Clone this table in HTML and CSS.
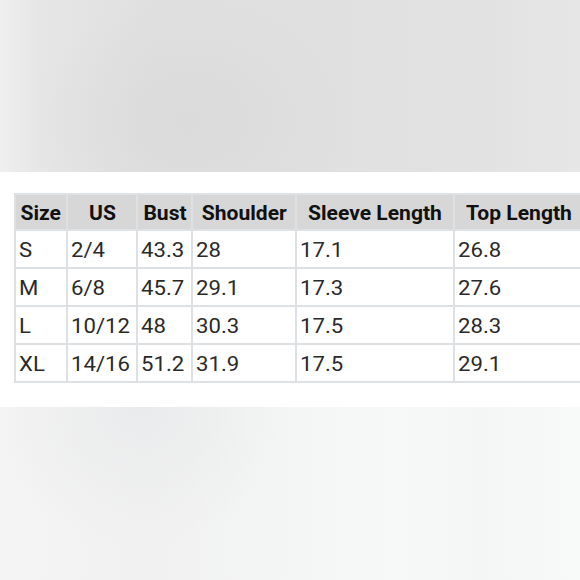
FILE: index.html
```html
<!DOCTYPE html>
<html>
<head>
<meta charset="utf-8">
<link rel="stylesheet" href="styles.css">
</head>
<body>
<div class="page">
  <div class="band band-top"></div>
  <div class="sheet">
    <table class="chart">
      <thead>
        <tr>
          <th class="c1"><span class="t">Size</span></th>
          <th class="c2"><span class="t">US</span></th>
          <th class="c3"><span class="t">Bust</span></th>
          <th class="c4"><span class="t">Shoulder</span></th>
          <th class="c5"><span class="t">Sleeve Length</span></th>
          <th class="c6"><span class="t">Top Length</span></th>
        </tr>
      </thead>
      <tbody>
        <tr><td><span class="t">S</span></td><td><span class="t">2/4</span></td><td><span class="t">43.3</span></td><td><span class="t">28</span></td><td><span class="t">17.1</span></td><td><span class="t">26.8</span></td></tr>
        <tr><td><span class="t">M</span></td><td><span class="t">6/8</span></td><td><span class="t">45.7</span></td><td><span class="t">29.1</span></td><td><span class="t">17.3</span></td><td><span class="t">27.6</span></td></tr>
        <tr><td><span class="t">L</span></td><td><span class="t">10/12</span></td><td><span class="t">48</span></td><td><span class="t">30.3</span></td><td><span class="t">17.5</span></td><td><span class="t">28.3</span></td></tr>
        <tr><td><span class="t">XL</span></td><td><span class="t">14/16</span></td><td><span class="t">51.2</span></td><td><span class="t">31.9</span></td><td><span class="t">17.5</span></td><td><span class="t">29.1</span></td></tr>
      </tbody>
    </table>
  </div>
  <div class="band band-bottom"></div>
</div>
</body>
</html>
```

FILE: styles.css
```css
html, body {
  margin: 0;
  padding: 0;
  background: #ffffff;
}
.page {
  width: 580px;
  height: 580px;
  overflow: hidden;
  display: flex;
  flex-direction: column;
}
.band-top {
  height: 172px;
  flex: none;
  background:
    radial-gradient(ellipse 160px 130px at 190px 120px, rgba(218,218,219,0.9), rgba(218,218,219,0) 100%),
    linear-gradient(to right, #efefef 0px, #e6e6e6 40px, #e0e0e0 150px, #e0e0e0 330px, #e2e2e2 480px, #e6e6e6 580px);
}
.sheet {
  height: 235px;
  flex: none;
  background: #ffffff;
  padding: 21px 0 0 14px;
  box-sizing: border-box;
  overflow: hidden;
}
.band-bottom {
  flex: 1;
  background:
    radial-gradient(ellipse 150px 140px at 140px 0px, rgba(234,235,236,1), rgba(234,235,236,0) 100%),
    linear-gradient(to right, #f4f4f4 0px, #f1f1f1 150px, #f4f5f5 300px, #f7f8f8 400px, #f4f5f5 480px, #f8f9f9 580px);
}
.chart {
  border-collapse: separate;
  border-spacing: 0;
  table-layout: fixed;
  width: 571px;
  border-left: 2px solid #dde1e4;
  border-top: 2px solid #dde1e4;
  font-family: Roboto, "Liberation Sans", sans-serif;
}
.chart th, .chart td {
  box-sizing: border-box;
  border-right: 2px solid #dde1e4;
  border-bottom: 2px solid #dde1e4;
  padding: 0;
  white-space: nowrap;
  overflow: visible;
}
.chart th {
  background: #d7d7d7;
  color: #111111;
  font-size: 19.5px;
  font-weight: 700;
  height: 36px;
  line-height: 31px;
  padding-top: 3px;
  text-align: center;
  vertical-align: top;
}
.chart td {
  color: #2a2a2a;
  font-size: 20.5px;
  font-weight: 400;
  height: 38px;
  line-height: 33px;
  padding: 3px 0 0 3px;
  text-align: left;
  vertical-align: top;
}
.c1 { width: 52px; }
.c2 { width: 70px; }
.c3 { width: 55px; }
.c4 { width: 104px; }
.c5 { width: 158px; }
.c6 { width: 130px; }
.t {
  display: inline-block;
  transform: scaleX(1.08);
}
.chart td .t {
  transform-origin: left center;
}
.chart th .t {
  transform-origin: center center;
}
```
